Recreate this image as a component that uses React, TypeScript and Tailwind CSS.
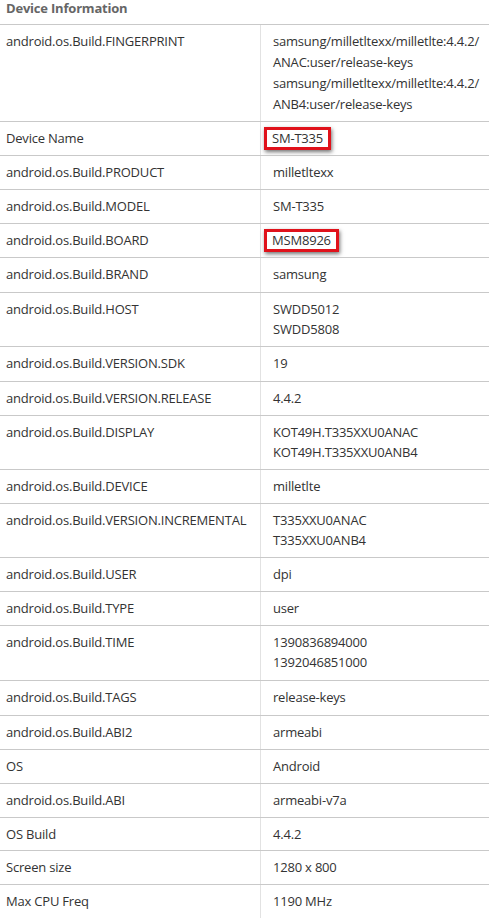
import React from 'react';

type Row = {
  label: string;
  values: string[];
  h: string;
  mark?: boolean;
};

const rows: Row[] = [
  {
    label: 'android.os.Build.FINGERPRINT',
    values: [
      'samsung/milletltexx/milletlte:4.4.2/',
      'ANAC:user/release-keys',
      'samsung/milletltexx/milletlte:4.4.2/',
      'ANB4:user/release-keys',
    ],
    h: 'h-[97px]',
  },
  { label: 'Device Name', values: ['SM-T335'], h: 'h-[34px]', mark: true },
  { label: 'android.os.Build.PRODUCT', values: ['milletltexx'], h: 'h-[34px]' },
  { label: 'android.os.Build.MODEL', values: ['SM-T335'], h: 'h-[34px]' },
  { label: 'android.os.Build.BOARD', values: ['MSM8926'], h: 'h-[34px]', mark: true },
  { label: 'android.os.Build.BRAND', values: ['samsung'], h: 'h-[35px]' },
  { label: 'android.os.Build.HOST', values: ['SWDD5012', 'SWDD5808'], h: 'h-[54px]' },
  { label: 'android.os.Build.VERSION.SDK', values: ['19'], h: 'h-[35px]' },
  { label: 'android.os.Build.VERSION.RELEASE', values: ['4.4.2'], h: 'h-[34px]' },
  { label: 'android.os.Build.DISPLAY', values: ['KOT49H.T335XXU0ANAC', 'KOT49H.T335XXU0ANB4'], h: 'h-[54px]' },
  { label: 'android.os.Build.DEVICE', values: ['milletlte'], h: 'h-[34px]' },
  { label: 'android.os.Build.VERSION.INCREMENTAL', values: ['T335XXU0ANAC', 'T335XXU0ANB4'], h: 'h-[54px]' },
  { label: 'android.os.Build.USER', values: ['dpi'], h: 'h-[34px]' },
  { label: 'android.os.Build.TYPE', values: ['user'], h: 'h-[34px]' },
  { label: 'android.os.Build.TIME', values: ['1390836894000', '1392046851000'], h: 'h-[55px]' },
  { label: 'android.os.Build.TAGS', values: ['release-keys'], h: 'h-[35px]' },
  { label: 'android.os.Build.ABI2', values: ['armeabi'], h: 'h-[34px]' },
  { label: 'OS', values: ['Android'], h: 'h-[34px]' },
  { label: 'android.os.Build.ABI', values: ['armeabi-v7a'], h: 'h-[34px]' },
  { label: 'OS Build', values: ['4.4.2'], h: 'h-[33px]' },
  { label: 'Screen size', values: ['1280 x 800'], h: 'h-[34px]' },
  { label: 'Max CPU Freq', values: ['1190 MHz'], h: 'h-[34px]' },
];

export default function App() {
  return (
    <div className="w-[489px] h-[920px] overflow-hidden bg-white text-[13px] tracking-[-0.2px] text-[#333] font-['Open_Sans','Liberation_Sans',sans-serif]">
      {/* Header */}
      <div className="h-[24px] px-[6px] leading-[16px] font-bold text-[#666]">
        Device Information
      </div>

      {/* Table */}
      <div className="w-[489px] flex flex-col">
        {rows.map((r) => (
          <div key={r.label} className={`flex border-t border-[#c9c9c9] ${r.h}`}>
            <div className="w-[261px] shrink-0 border-r border-[#e2e2e2] pl-[6px] pt-[6px] leading-[20px] whitespace-nowrap">
              {r.label}
            </div>
            <div
              className={`flex-1 pl-[12px] pt-[6px] whitespace-nowrap ${
                r.values.length > 2 ? 'leading-[21px]' : 'leading-[20px]'
              }`}
            >
              {r.mark ? (
                <span className="inline-block -ml-[9px] -mt-[4px] border-[3px] border-[#e0121b] px-[5px] leading-[17px] shadow-[1px_2px_4px_rgba(0,0,0,0.55)]">
                  {r.values[0]}
                </span>
              ) : (
                r.values.map((v, i) => <div key={i}>{v}</div>)
              )}
            </div>
          </div>
        ))}
      </div>
    </div>
  );
}
